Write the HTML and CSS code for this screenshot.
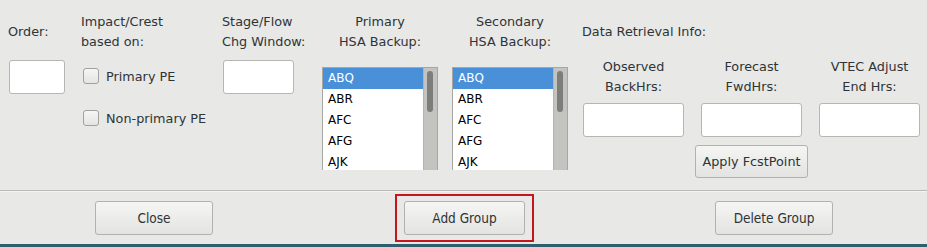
FILE: index.html
```html
<!DOCTYPE html>
<html lang="en">
<head>
    <meta charset="UTF-8" />
    <link rel="stylesheet" href="styles.css">
</head>
<body>

    <section class="dlg">
        <div class="top">
            <div class="col col-order">
                <div class="head">Order:</div>
                <input type="text" class="entry" name="order" />
            </div>
            <div class="col col-impact">
                <div class="head head-left">Impact/Crest<br />based on:</div>
                <label class="check"><span class="box"></span>Primary PE</label>
                <label class="check"><span class="box"></span>Non-primary PE</label>
            </div>
            <div class="col col-stage">
                <div class="head head-left">Stage/Flow<br />Chg Window:</div>
                <input type="text" class="entry" name="window" />
            </div>
            <div class="col col-hsa">
                <div class="head head-center">Primary<br />HSA Backup:</div>
                <div class="list">
                    <ul>
                        <li class="sel">ABQ</li>
                        <li>ABR</li>
                        <li>AFC</li>
                        <li>AFG</li>
                        <li>AJK</li>
                    </ul>
                    <div class="trough"><div class="thumb"></div></div>
                </div>
            </div>
            <div class="col col-hsa col-hsa2">
                <div class="head head-center">Secondary<br />HSA Backup:</div>
                <div class="list">
                    <ul>
                        <li class="sel">ABQ</li>
                        <li>ABR</li>
                        <li>AFC</li>
                        <li>AFG</li>
                        <li>AJK</li>
                    </ul>
                    <div class="trough"><div class="thumb"></div></div>
                </div>
            </div>
            <div class="col col-data">
                <div class="title">Data Retrieval Info:</div>
                <div class="hrs">
                    <div class="hr">
                        <div class="sub">Observed<br />BackHrs:</div>
                        <input type="text" class="entry" name="back" />
                    </div>
                    <div class="hr">
                        <div class="sub">Forecast<br />FwdHrs:</div>
                        <input type="text" class="entry" name="fwd" />
                        <button class="btn btn-apply">Apply FcstPoint</button>
                    </div>
                    <div class="hr">
                        <div class="sub">VTEC Adjust<br />End Hrs:</div>
                        <input type="text" class="entry" name="end" />
                    </div>
                </div>
            </div>
        </div>

        <div class="actions">
            <button class="btn btn-close">Close</button>
            <span class="focus"><button class="btn btn-add">Add Group</button></span>
            <button class="btn btn-delete">Delete Group</button>
        </div>
        <div class="strip"></div>
    </section>

</body>
</html>
```

FILE: styles.css
```css
html,
body {
    padding: 0;
    margin: 0;
    height: 100%;
}
body {
    background: #e8e8e7;
    color: #2e3436;
    font-family: "DejaVu Sans", sans-serif;
    font-size: 12.8px;
}
.dlg {
    width: 927px;
    height: 247px;
    overflow: hidden;
}
.top {
    display: flex;
    height: 178px;
    padding: 12px 0 0 8px;
    border-bottom: 1px solid #b8b8b5;
    box-shadow: 0 1px 0 #f4f4f3;
}
.col {
    display: flex;
    flex-direction: column;
}
.head {
    height: 40px;
    line-height: 20px;
    display: flex;
    align-items: center;
    white-space: nowrap;
}
.head-center {
    justify-content: center;
    text-align: center;
}
.col-order {
    width: 57px;
}
.col-impact {
    width: 130px;
    margin-left: 16px;
}
.col-stage {
    width: 72px;
    margin-left: 11px;
}
.col-hsa {
    width: 116px;
    margin-left: 28px;
}
.col-hsa2 {
    margin-left: 14px;
}
.col-data {
    margin-left: 14px;
}
.entry {
    box-sizing: border-box;
    height: 34px;
    margin: 8px 0 0 1px;
    border: 1px solid #b6b6b3;
    border-radius: 3px;
    background: #fff;
    outline: none;
}
.col-order .entry {
    width: 56px;
}
.col-stage .entry {
    width: 71px;
}
.check {
    display: flex;
    align-items: center;
    height: 20px;
    margin: 14px 0 0 2px;
    white-space: nowrap;
}
.check + .check {
    margin-top: 22px;
}
.box {
    box-sizing: border-box;
    width: 16px;
    height: 16px;
    margin-right: 7px;
    border: 1px solid #a1a19e;
    border-radius: 3px;
    background: linear-gradient(#f6f6f5, #e4e4e2);
}
.list {
    display: flex;
    height: 102px;
    margin-top: 15px;
    border: 1px solid #a6a6a3;
    border-bottom: 0;
    background: #fff;
    overflow: hidden;
}
.list ul {
    flex: 1;
    margin: 0;
    padding: 0;
    list-style: none;
    font-size: 12px;
    color: #000;
}
.list li {
    height: 21px;
    line-height: 21px;
    padding-left: 5px;
}
.list li.sel {
    background: #4a90d9;
    color: #fff;
}
.trough {
    width: 13px;
    background: #c3c3c0;
    border-left: 1px solid #b3b3b0;
    padding-top: 3px;
}
.thumb {
    width: 6px;
    height: 41px;
    margin-left: 3px;
    border-radius: 3px;
    background: #7d7e7c;
}
.title {
    height: 20px;
    line-height: 20px;
    margin-top: 10px;
}
.hrs {
    display: flex;
    gap: 17px;
    margin-top: 15px;
    margin-left: 1px;
}
.hr {
    width: 101px;
    display: flex;
    flex-direction: column;
    align-items: center;
}
.sub {
    line-height: 20px;
    text-align: center;
    white-space: nowrap;
}
.hr .entry {
    width: 101px;
    margin: 6px 0 0 0;
}
.btn {
    box-sizing: border-box;
    height: 34px;
    border: 1px solid #b1b1ae;
    border-radius: 3px;
    background: linear-gradient(#f5f5f4, #e3e3e1);
    color: #2e3436;
    font-family: "DejaVu Sans Condensed", "DejaVu Sans", sans-serif;
    font-size: 13.5px;
    padding: 0;
}
.btn-apply {
    width: 113px;
    height: 33px;
    margin-top: 8px;
    font-family: "DejaVu Sans", sans-serif;
    font-size: 12.8px;
}
.actions {
    display: flex;
    align-items: center;
    height: 52px;
    margin-top: 1px;
}
.btn-close {
    width: 118px;
    margin-left: 95px;
}
.focus {
    box-sizing: border-box;
    display: flex;
    align-items: center;
    height: 48px;
    margin-left: 182px;
    padding: 0 7px;
    border: 2px solid #c4161c;
}
.btn-add {
    width: 121px;
}
.btn-delete {
    width: 118px;
    margin-left: 181px;
}
.strip {
    height: 4px;
    background: #2f5e6e;
}
```
